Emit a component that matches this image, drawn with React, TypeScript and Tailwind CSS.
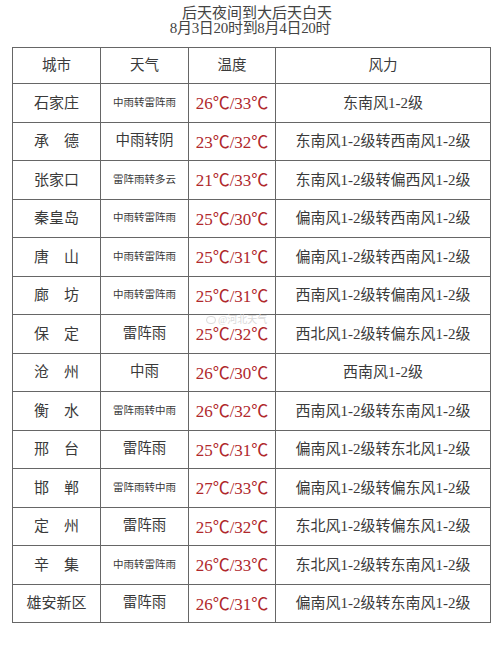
import React from "react";

const rows: [string, string, boolean, string, string, string][] = [
  ["石家庄", "中雨转雷阵雨", true, "26", "33", "东南风1-2级"],
  ["承　德", "中雨转阴", false, "23", "32", "东南风1-2级转西南风1-2级"],
  ["张家口", "雷阵雨转多云", true, "21", "33", "东南风1-2级转偏西风1-2级"],
  ["秦皇岛", "中雨转雷阵雨", true, "25", "30", "偏南风1-2级转西南风1-2级"],
  ["唐　山", "中雨转雷阵雨", true, "25", "31", "偏南风1-2级转西南风1-2级"],
  ["廊　坊", "中雨转雷阵雨", true, "25", "31", "西南风1-2级转偏南风1-2级"],
  ["保　定", "雷阵雨", false, "25", "32", "西北风1-2级转偏东风1-2级"],
  ["沧　州", "中雨", false, "26", "30", "西南风1-2级"],
  ["衡　水", "雷阵雨转中雨", true, "26", "32", "西南风1-2级转东南风1-2级"],
  ["邢　台", "雷阵雨", false, "25", "31", "偏南风1-2级转东北风1-2级"],
  ["邯　郸", "雷阵雨转中雨", true, "27", "33", "偏南风1-2级转偏东风1-2级"],
  ["定　州", "雷阵雨", false, "25", "32", "东北风1-2级转偏东风1-2级"],
  ["辛　集", "中雨转雷阵雨", true, "26", "33", "东北风1-2级转东南风1-2级"],
  ["雄安新区", "雷阵雨", false, "26", "31", "偏南风1-2级转东南风1-2级"],
];

const font = {
  fontFamily: '"Liberation Serif", "Noto Sans CJK SC", serif',
};

function C() {
  return (
    <span style={{ fontFamily: '"Noto Sans CJK SC", sans-serif' }}>℃</span>
  );
}

export default function App() {
  return (
    <div
      className="relative w-[500px] h-[646px] bg-white text-[#3a3a3a]"
      style={font}
    >
      <div className="pt-[6px] flex flex-col items-center text-[15px] leading-[15px] text-[#444]">
        <div className="pl-[14px]">后天夜间到大后天白天</div>
        <div className="tracking-[-0.3px]">8月3日20时到8月4日20时</div>
      </div>
      <div className="pl-[12px] pt-[11px]">
        <table className="border-collapse w-[478px] table-fixed">
          <colgroup>
            <col className="w-[88px]" />
            <col className="w-[88px]" />
            <col className="w-[87px]" />
            <col className="w-[215px]" />
          </colgroup>
          <thead>
            <tr className="h-[36px] text-[14.5px]">
              <th className="border border-[#666] font-normal">城市</th>
              <th className="border border-[#666] font-normal">天气</th>
              <th className="border border-[#666] font-normal">温度</th>
              <th className="border border-[#666] font-normal">风力</th>
            </tr>
          </thead>
          <tbody>
            {rows.map(([city, weather, small, lo, hi, wind], i) => (
              <tr key={i} className="h-[38.5px]">
                <td className="border border-[#666] text-center text-[15px] whitespace-nowrap">
                  {city}
                </td>
                <td
                  className={
                    small
                      ? "border border-[#666] text-center text-[10.5px] whitespace-nowrap"
                      : "border border-[#666] text-center text-[14.5px] whitespace-nowrap"
                  }
                >
                  {weather}
                </td>
                <td className="border border-[#666] text-center text-[17px] text-[#b0282c] whitespace-nowrap">
                  {lo}
                  <C />/{hi}
                  <C />
                </td>
                <td className="border border-[#666] text-center text-[15px] whitespace-nowrap">
                  {wind}
                </td>
              </tr>
            ))}
          </tbody>
        </table>
      </div>
      <div className="absolute left-[206px] top-[315px] text-[10px] text-[#dadada] leading-none flex items-center gap-[2px]">
        <span className="w-[10px] h-[8px] rounded-full border border-[#dadada] inline-block" />
        <span>@河北天气</span>
      </div>
    </div>
  );
}
